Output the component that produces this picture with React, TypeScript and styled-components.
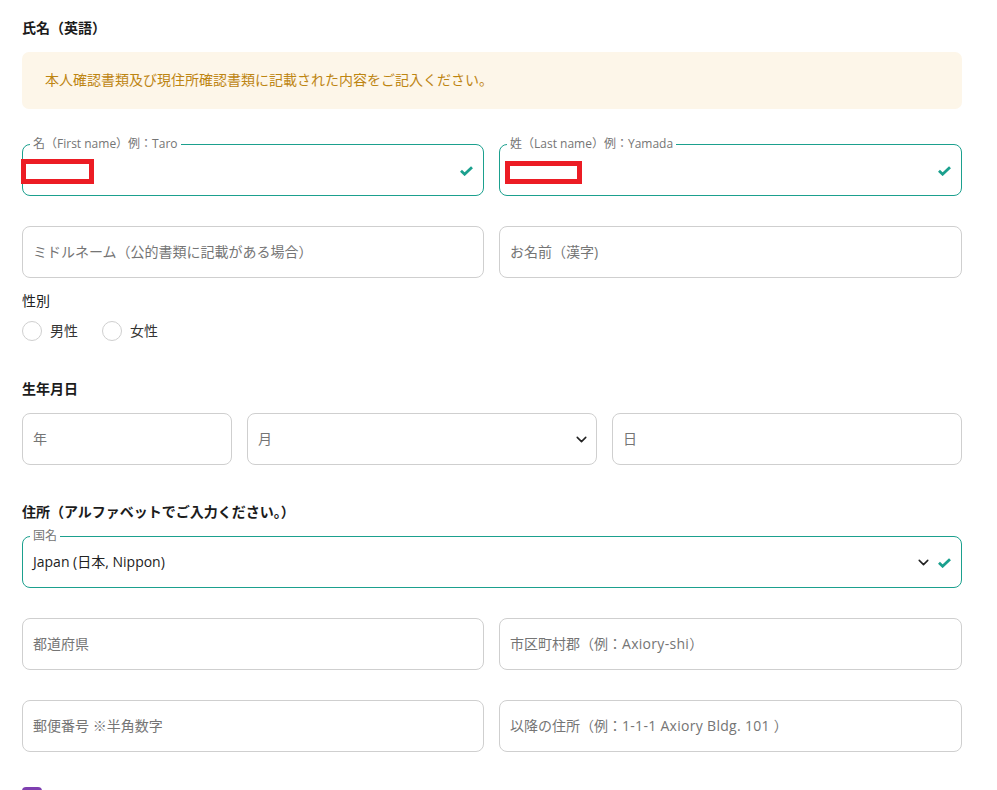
import { FC } from "react";
import styled, { createGlobalStyle } from "styled-components";
import { ChevronDown } from "lucide-react";

const GlobalStyle = createGlobalStyle`
  html, body {
    margin: 0;
    height: 790px;
    overflow: hidden;
    background: #fff;
  }
  * {
    box-sizing: border-box;
  }
`;

const Page = styled.form`
  width: 997px;
  padding: 20px 35px 0 22px;
  font-family: "Open Sans", "Noto Sans CJK JP", sans-serif;
  color: #222;
`;

const Heading = styled.h3<{ $bottom: number }>`
  margin: 0 0 ${(p) => p.$bottom}px;
  font-size: 14px;
  line-height: 16px;
  font-weight: 700;
  color: #1c1c1c;
`;

const Notice = styled.div`
  height: 57px;
  margin-bottom: 35px;
  padding: 0 23px 3px;
  display: flex;
  align-items: center;
  background: #fdf6e9;
  border-radius: 7px;
  color: #bd8512;
  font-size: 14px;
`;

const Row = styled.div<{ $columns?: string; $bottom?: number }>`
  display: grid;
  grid-template-columns: ${(p) => p.$columns ?? "462px 463px"};
  column-gap: 15px;
  margin-bottom: ${(p) => p.$bottom ?? 30}px;
`;

const FieldBox = styled.div<{ $valid?: boolean }>`
  position: relative;
  height: 52px;
  padding: 0 10px;
  display: flex;
  align-items: center;
  gap: 7px;
  background: #fff;
  border: 1px solid ${(p) => (p.$valid ? "#1ba08e" : "#cfcfcf")};
  border-radius: 8px;
  font-size: 14px;
`;

const Placeholder = styled.span`
  flex: 1;
  padding-bottom: 2px;
  color: #757575;
`;

const Latin = styled.span`
  letter-spacing: 0.3px;
`;

const Value = styled.span`
  flex: 1;
  padding-bottom: 2px;
  color: #222;
`;

const FloatLabel = styled.label`
  position: absolute;
  top: -8px;
  left: 7px;
  padding: 0 3px;
  background: #fff;
  color: #757575;
  font-size: 12px;
  line-height: 14px;
  white-space: nowrap;
`;

const Redaction = styled.div<{ $left: number; $top: number; $width: number; $height: number }>`
  position: absolute;
  top: ${(p) => p.$top}px;
  left: ${(p) => p.$left}px;
  width: ${(p) => p.$width}px;
  height: ${(p) => p.$height}px;
  background: #fff;
  border: 5px solid #ec1c24;
`;

const GenderLabel = styled.div`
  margin-top: -30px;
  padding-top: 14px;
  font-size: 14px;
  line-height: 18px;
  color: #222;
`;

const RadioRow = styled.div`
  display: flex;
  gap: 24px;
  margin-top: 11px;
  margin-bottom: 40px;
`;

const RadioOption = styled.label`
  display: flex;
  align-items: center;
  gap: 8px;
  font-size: 14px;
  line-height: 20px;
  color: #333;
`;

const RadioDot = styled.span`
  width: 20px;
  height: 20px;
  border: 1px solid #cfcfcf;
  border-radius: 50%;
  background: #fff;
`;

const Chevron = styled(ChevronDown)<{ $pull: number }>`
  width: 17px;
  height: 17px;
  margin-right: -${(p) => p.$pull}px;
  color: #222;
  flex-shrink: 0;
`;

const CheckIcon = styled.svg`
  width: 13px;
  height: 10px;
  margin-top: 2px;
  flex-shrink: 0;
`;

const Purple = styled.span`
  display: block;
  width: 20px;
  height: 20px;
  background: #7e3fb0;
  border-radius: 4px;
`;

const CheckMark: FC = () => (
  <CheckIcon viewBox="0 0 13 10" fill="none">
    <path d="M1 4.8 4.6 8.2 12 1.2" stroke="#1ba08e" strokeWidth="2.8" />
  </CheckIcon>
);

const App = () => {
  return (
    <>
      <GlobalStyle />
      <Page>
        <Heading $bottom={16}>氏名（英語）</Heading>
        <Notice>本人確認書類及び現住所確認書類に記載された内容をご記入ください。</Notice>

        <Row>
          <FieldBox $valid>
            <FloatLabel>名（First name）例：Taro</FloatLabel>
            <Redaction $left={-2} $top={14} $width={73} $height={25} />
            <Value />
            <CheckMark />
          </FieldBox>
          <FieldBox $valid>
            <FloatLabel>姓（Last name）例：Yamada</FloatLabel>
            <Redaction $left={5} $top={16} $width={77} $height={23} />
            <Value />
            <CheckMark />
          </FieldBox>
        </Row>
        <Row>
          <FieldBox>
            <Placeholder>ミドルネーム（公的書類に記載がある場合）</Placeholder>
          </FieldBox>
          <FieldBox>
            <Placeholder>お名前（漢字)</Placeholder>
          </FieldBox>
        </Row>

        <GenderLabel>性別</GenderLabel>
        <RadioRow>
          <RadioOption>
            <RadioDot />
            男性
          </RadioOption>
          <RadioOption>
            <RadioDot />
            女性
          </RadioOption>
        </RadioRow>

        <Heading $bottom={16}>生年月日</Heading>
        <Row $columns="210px 350px 350px" $bottom={39}>
          <FieldBox>
            <Placeholder>年</Placeholder>
          </FieldBox>
          <FieldBox>
            <Placeholder>月</Placeholder>
            <Chevron $pull={3.5} strokeWidth={2.2} />
          </FieldBox>
          <FieldBox>
            <Placeholder>日</Placeholder>
          </FieldBox>
        </Row>

        <Heading $bottom={16}>住所（アルファベットでご入力ください。）</Heading>
        <Row $columns="940px">
          <FieldBox $valid>
            <FloatLabel>国名</FloatLabel>
            <Value>Japan (日本, Nippon)</Value>
            <Chevron $pull={0.5} strokeWidth={2.2} />
            <CheckMark />
          </FieldBox>
        </Row>
        <Row>
          <FieldBox>
            <Placeholder>都道府県</Placeholder>
          </FieldBox>
          <FieldBox>
            <Placeholder>
              市区町村郡（例：<Latin>Axiory-shi</Latin>）
            </Placeholder>
          </FieldBox>
        </Row>
        <Row $bottom={35}>
          <FieldBox>
            <Placeholder>郵便番号 ※半角数字</Placeholder>
          </FieldBox>
          <FieldBox>
            <Placeholder>
              以降の住所（例：<Latin>1-1-1 Axiory Bldg. 101 </Latin>）
            </Placeholder>
          </FieldBox>
        </Row>
        <Purple />
      </Page>
    </>
  );
};

export default App;
